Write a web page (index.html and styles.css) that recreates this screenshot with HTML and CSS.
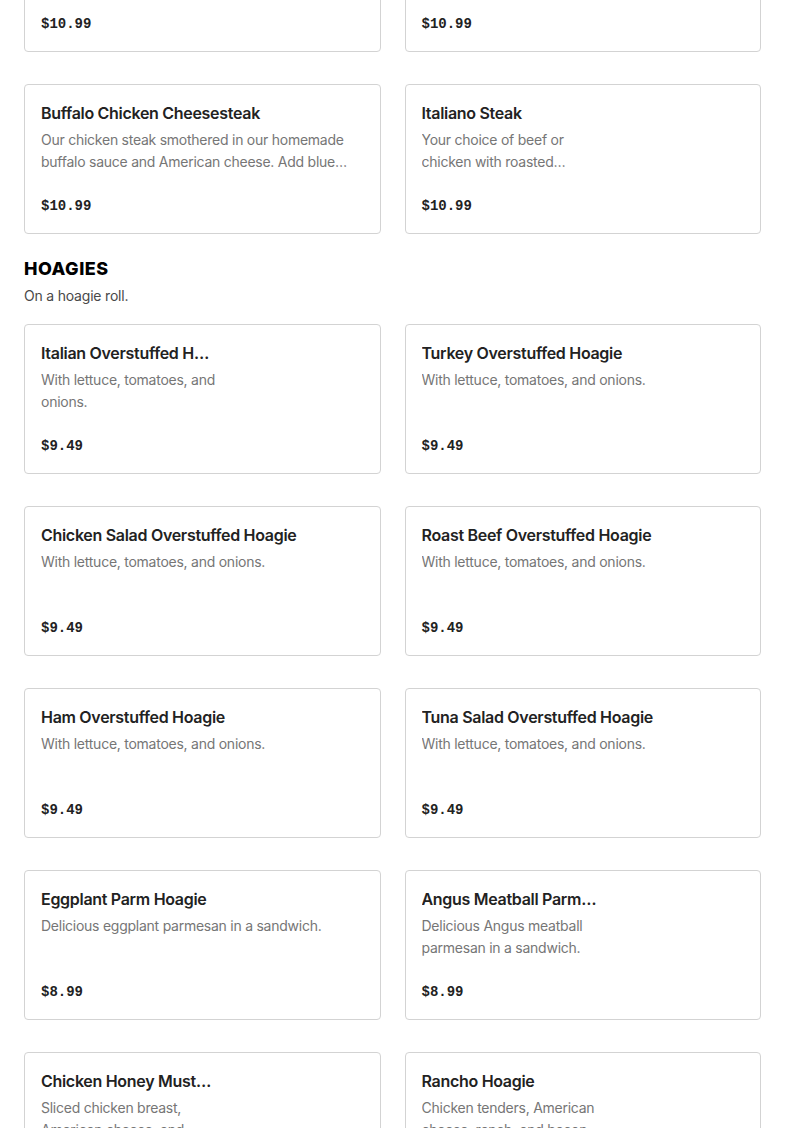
FILE: index.html
```html
<!DOCTYPE html>
<html lang="en">
<head>
<meta charset="utf-8">
<title>Menu</title>
<link rel="stylesheet" href="styles.css">
</head>
<body>
<main class="page">
  <div class="grid grid-first">
    <div class="card"><div class="info"><h3 class="title">Philly Cheesesteak</h3><p class="desc">Our classic steak with fried onions.</p><div class="price">$10.99</div></div></div>
    <div class="card"><div class="info"><h3 class="title">Chicken Cheesesteak</h3><p class="desc">Chicken steak with fried onions.</p><div class="price">$10.99</div></div></div>
    <div class="card"><div class="info"><h3 class="title">Buffalo Chicken Cheesesteak</h3><p class="desc">Our chicken steak smothered in our homemade buffalo sauce and American cheese. Add blue cheese.</p><div class="price">$10.99</div></div></div>
    <div class="card has-img"><div class="info"><h3 class="title">Italiano Steak</h3><p class="desc">Your choice of beef or chicken with roasted peppers.</p><div class="price">$10.99</div></div></div>
  </div>

  <section class="section">
    <h2 class="section-title">HOAGIES</h2>
    <p class="section-sub">On a hoagie roll.</p>
    <div class="grid">
      <div class="card has-img"><div class="info"><h3 class="title">Italian Overstuffed Hoagie</h3><p class="desc">With lettuce, tomatoes, and onions.</p><div class="price">$9.49</div></div></div>
      <div class="card"><div class="info"><h3 class="title">Turkey Overstuffed Hoagie</h3><p class="desc">With lettuce, tomatoes, and onions.</p><div class="price">$9.49</div></div></div>
      <div class="card"><div class="info"><h3 class="title">Chicken Salad Overstuffed Hoagie</h3><p class="desc">With lettuce, tomatoes, and onions.</p><div class="price">$9.49</div></div></div>
      <div class="card"><div class="info"><h3 class="title">Roast Beef Overstuffed Hoagie</h3><p class="desc">With lettuce, tomatoes, and onions.</p><div class="price">$9.49</div></div></div>
      <div class="card"><div class="info"><h3 class="title">Ham Overstuffed Hoagie</h3><p class="desc">With lettuce, tomatoes, and onions.</p><div class="price">$9.49</div></div></div>
      <div class="card"><div class="info"><h3 class="title">Tuna Salad Overstuffed Hoagie</h3><p class="desc">With lettuce, tomatoes, and onions.</p><div class="price">$9.49</div></div></div>
      <div class="card"><div class="info"><h3 class="title">Eggplant Parm Hoagie</h3><p class="desc">Delicious eggplant parmesan in a sandwich.</p><div class="price">$8.99</div></div></div>
      <div class="card has-img"><div class="info"><h3 class="title">Angus Meatball Parm Hoagie</h3><p class="desc">Delicious Angus meatball parmesan in a sandwich.</p><div class="price">$8.99</div></div></div>
      <div class="card has-img"><div class="info"><h3 class="title">Chicken Honey Mustard Hoagie</h3><p class="desc">Sliced chicken breast, American cheese, and honey mustard.</p><div class="price">$9.49</div></div></div>
      <div class="card has-img"><div class="info"><h3 class="title">Rancho Hoagie</h3><p class="desc">Chicken tenders, American cheese, ranch, and bacon.</p><div class="price">$9.49</div></div></div>
    </div>
  </section>
</main>
</body>
</html>
```

FILE: styles.css
```css
* { box-sizing: border-box; }
html, body { margin: 0; padding: 0; background: #ffffff; }
body {
  font-family: Inter, "Noto Sans", "Liberation Sans", sans-serif;
  color: #191919;
  overflow: hidden;
}
.page { padding: 0 24px; }
.grid {
  display: grid;
  grid-template-columns: 1fr 1fr;
  column-gap: 24px;
  row-gap: 32px;
}
.grid-first { margin-top: -98px; }
.card {
  height: 150px;
  border: 1px solid #d3d3d3;
  border-radius: 4px;
  padding: 16px;
  display: flex;
  background: #fff;
}
.info {
  display: flex;
  flex-direction: column;
  min-width: 0;
  flex: 1;
}
.has-img .info { flex: 0 0 auto; width: 185px; }
.has-img .title { width: 176px; }
.title {
  margin: 0;
  font-size: 16px;
  line-height: 24px;
  font-weight: 600;
  letter-spacing: -0.3px;
  color: #222;
  white-space: nowrap;
  overflow: hidden;
  text-overflow: ellipsis;
}
.desc {
  margin: 4px 0 0;
  font-size: 14px;
  line-height: 22px;
  letter-spacing: -0.25px;
  height: 44px;
  color: #767676;
  overflow: hidden;
  display: -webkit-box;
  -webkit-line-clamp: 2;
  -webkit-box-orient: vertical;
}
.price {
  margin-top: 22px;
  font-family: "Liberation Mono", "DejaVu Sans Mono", monospace;
  font-weight: 700;
  font-size: 14px;
  line-height: 22px;
  color: #222;
}
.section { margin-top: 23px; }
.section-title {
  margin: 0;
  font-size: 18px;
  line-height: 24px;
  font-weight: 800;
  color: #000;
  letter-spacing: 0.5px;
}
.section-sub {
  margin: 4px 0 17px;
  font-size: 14px;
  line-height: 22px;
  letter-spacing: -0.2px;
  color: #494949;
}
```
